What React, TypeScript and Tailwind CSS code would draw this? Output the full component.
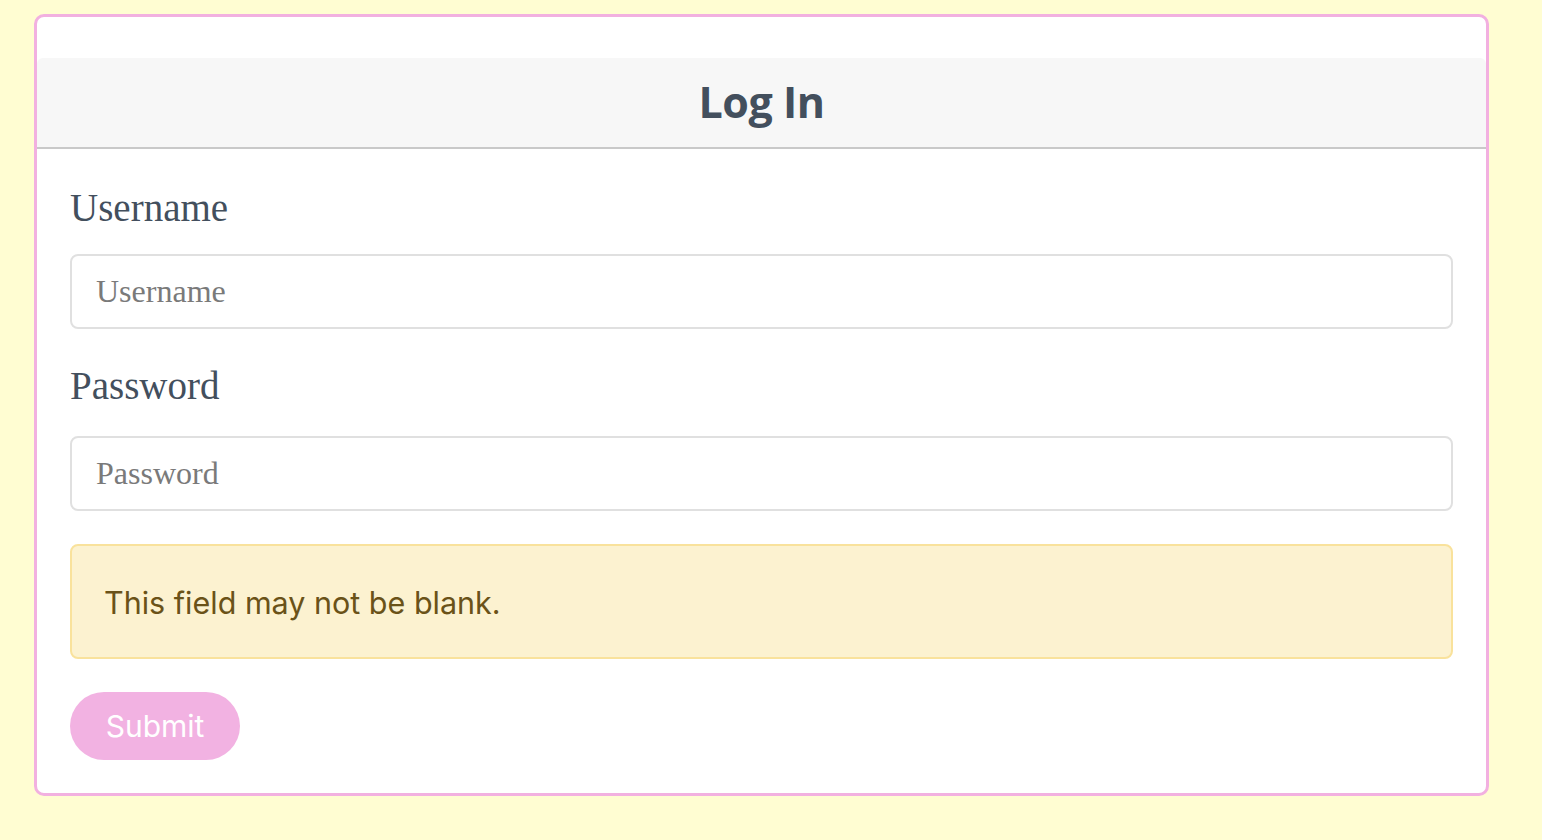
import { useState } from "react";

const LoginPage = () => {
    const [username, setUsername] = useState("");
    const [password, setPassword] = useState("");

    return (
        <div className="min-h-screen w-full bg-[#fffdd2] pt-[14px] pl-[34px] pb-[40px]">
            <div className="w-[1455px] rounded-[10px] border-[3px] border-[#f2b0e0] bg-white pt-[41px]">
                <div className="flex h-[91px] items-center justify-center rounded-t-[6px] border-b-2 border-[#c9c9c9] bg-[#f7f7f7]">
                    <h1 className="font-['Open_Sans',sans-serif] text-[43px] font-bold tracking-[-0.5px] text-[#434f5d]">Log In</h1>
                </div>

                <form className="flex flex-col px-[33px] pt-[36px] pb-[33px]" onSubmit={(e) => e.preventDefault()}>
                    <label htmlFor="username" className="h-[48px] font-['Liberation_Serif',serif] text-[39px] leading-[46px] text-[#434f5d]">Username</label>
                    <input type="text" name="username" id="username"
                        placeholder="Username"
                        value={username}
                        onChange={(e) => setUsername(e.target.value)}
                        className="mt-[21px] h-[75px] w-full rounded-[8px] border-2 border-[#e0e0e0] px-[24px] font-['Liberation_Serif',serif] text-[32px] text-[#434f5d] placeholder:text-[#7a7a7a] focus:outline-none" />

                    <label htmlFor="password" className="mt-[34px] h-[48px] font-['Liberation_Serif',serif] text-[39px] leading-[46px] text-[#434f5d]">Password</label>
                    <input type="password" name="password" id="password"
                        placeholder="Password"
                        value={password}
                        onChange={(e) => setPassword(e.target.value)}
                        className="mt-[25px] h-[75px] w-full rounded-[8px] border-2 border-[#e0e0e0] px-[24px] font-['Liberation_Serif',serif] text-[32px] text-[#434f5d] placeholder:text-[#7a7a7a] focus:outline-none" />

                    <div className="mt-[33px] flex h-[115px] items-center rounded-[8px] border-2 border-[#f9e29c] bg-[#fcf2d0] px-[32px]">
                        <p className="pt-[3px] font-['Inter',sans-serif] text-[30.5px] text-[#6a5218]">This field may not be blank.</p>
                    </div>

                    <div className="mt-[33px]">
                        <button type="submit" className="h-[68px] w-[170px] rounded-full bg-[#f2b2e2] font-['Inter',sans-serif] text-[30px] text-white">Submit</button>
                    </div>
                </form>
            </div>
        </div>
    );
};

export default function App() {
    return <LoginPage />;
}
